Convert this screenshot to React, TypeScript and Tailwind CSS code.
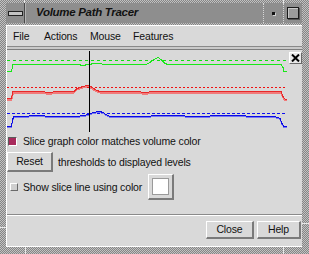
import React from "react";

const green: [number, number][] = [
  [7, 71], [11, 71], [12, 69], [13, 64], [80, 64], [81, 65], [85, 65], [86, 64], [91, 64], [92, 62.5], [100, 62.5], [102, 63.5], [104, 64], [146, 64], [150, 62], [154, 59], [158, 57], [161, 59], [165, 63], [168, 64], [188, 64], [190, 63.5], [193, 64], [281, 64], [283, 67], [284, 71], [287, 71],
];
const red: [number, number][] = [
  [7, 98], [11, 98], [12, 96], [13, 91], [44, 91], [46, 92], [52, 92], [54, 91], [74, 91], [77, 88], [83, 86], [89, 84.5], [92, 87], [97, 90], [100, 91], [140, 91], [142, 92], [148, 92], [150, 91], [281, 91], [283, 96], [285, 98.5], [287, 98.5],
];
const blue: [number, number][] = [
  [7, 126], [11, 126], [12, 123], [13, 118], [14, 116], [28, 116], [30, 115], [44, 115], [46, 116], [75, 116], [80, 115.5], [86, 114.5], [89, 113.5], [93, 112], [100, 111], [103, 112], [106, 114], [110, 116], [150, 116], [152, 115], [184, 115], [186, 116], [209, 116], [211, 115], [245, 115], [247, 116], [275, 116], [280, 118], [282, 123], [284, 126], [287, 126],
];

const pts = (a: [number, number][], dy = 0) =>
  a.map(([x, y]) => `${x},${y + 0.5 + dy}`).join(" ");

function Graph() {
  return (
    <div className="relative h-[82px]">
      <svg width="295" height="82" viewBox="0 0 295 82" className="block">
        <g transform="translate(-7,-50)" shapeRendering="crispEdges" fill="none">
          <line x1="7" y1="60.5" x2="287" y2="60.5" stroke="#10e010" strokeDasharray="3 3" />
          <polyline points={pts(green)} stroke="#18e818" strokeWidth="1" />
          <line x1="7" y1="87.5" x2="287" y2="87.5" stroke="#f01010" strokeDasharray="2 2" />
          <polyline points={pts(red, 1)} stroke="#f07b7b" strokeWidth="2" />
          <polyline points={pts(red)} stroke="#e82828" strokeWidth="1" />
          <line x1="7" y1="113.5" x2="287" y2="113.5" stroke="#1010f0" strokeDasharray="3 2" />
          <polyline points={pts(blue, 1)} stroke="#7a7af0" strokeWidth="1" />
          <polyline points={pts(blue)} stroke="#0a0ae6" strokeWidth="1" />
          <line x1="89.5" y1="51" x2="89.5" y2="132" stroke="#000" strokeWidth="1" />
        </g>
      </svg>
      <div className="absolute left-[282px] top-[2px] w-[13px] h-[12px] bg-[#e8e8e8] border-t border-l border-white border-r border-b border-r-[#6a6a6a] border-b-[#6a6a6a] flex items-center justify-center">
        <svg width="9" height="8" viewBox="0 0 9 8">
          <path d="M1 0.5 L8 7.5 M8 0.5 L1 7.5" stroke="#000" strokeWidth="2" />
        </svg>
      </div>
    </div>
  );
}

function Button({ label, w }: { label: string; w: string }) {
  return (
    <div
      className={`${w} h-full flex items-center justify-center bg-[#d9d9d9] border-t border-l border-white border-r-2 border-b-2 border-r-[#7a7a7a] border-b-[#7a7a7a] text-[#111]`}
    >
      {label}
    </div>
  );
}

export default function App() {
  return (
    <div className="w-[309px] h-[254px] relative bg-[repeating-conic-gradient(#858585_0%_25%,#c2c2c2_0%_50%)] bg-[length:2px_2px] pl-[6px] pr-[7px] pt-[3px] pb-[7px] flex flex-col font-['Liberation_Sans',Arial,sans-serif] text-[10.5px] tracking-[-0.15px] leading-none">
      {/* frame corner marks */}
      <div className="absolute left-[24px] top-0 w-px h-[3px] bg-[#e8e8e8]" />
      <div className="absolute left-[283px] top-0 w-px h-[3px] bg-[#e8e8e8]" />
      <div className="absolute left-[25px] bottom-0 w-px h-[7px] bg-[#e8e8e8]" />
      <div className="absolute left-[283px] bottom-0 w-px h-[7px] bg-[#e8e8e8]" />
      <div className="absolute left-0 top-[227px] w-[6px] h-px bg-[#e8e8e8]" />
      <div className="absolute right-0 top-[223px] w-[7px] h-px bg-[#e8e8e8]" />
      {/* title bar */}
      <div className="h-[20px] bg-[#8e8e8e] flex items-stretch">
        <div className="w-[18px] flex items-center justify-center">
          <div className="w-[15px] h-[5px] border border-[#222] bg-[#c4c4c4]" />
        </div>
        <div className="w-px bg-[#4a4a4a]" />
        <div className="w-px bg-[#b4b4b4]" />
        <div className="ml-[10px] flex items-center text-[11.5px] font-bold italic tracking-[-0.3px] text-[#121212]">
          Volume Path Tracer
        </div>
        <div className="flex-1" />
        <div className="w-px border-l border-dotted border-[#d6d6d6]" />
        <div className="w-[19px] flex items-center justify-center">
          <div className="w-[3px] h-[3px] bg-[#111] shadow-[1px_1px_0_#cfcfcf]" />
        </div>
        <div className="w-px border-l border-dotted border-[#d6d6d6]" />
        <div className="w-[18px] flex items-center justify-center">
          <div className="w-[12px] h-[12px] border border-[#1a1a1a] bg-[#9a9a9a] shadow-[inset_1px_1px_0_#c8c8c8,1px_1px_0_#555]" />
        </div>
      </div>
      <div className="h-[2px]" />
      {/* client */}
      <div className="flex-1 bg-[#d9d9d9] border-l border-b border-white flex flex-col text-[#111]">
        {/* menu bar */}
        <div className="h-[22px] border-t border-white border-b border-b-[#8a8a8a] flex items-center">
          <span className="ml-[6px] w-[31px]">File</span>
          <span className="w-[46px]">Actions</span>
          <span className="w-[43px]">Mouse</span>
          <span>Features</span>
        </div>
        <div className="h-[2px] bg-[#cacaca]" />
        <div className="h-px bg-[#7e7e7e]" />
        <Graph />
        {/* row 1 */}
        <div className="mt-[3px] h-[13px] flex items-center">
          <div className="ml-[1px] w-[9px] h-[9px] bg-[#a82a5c] border-t border-l border-[#5a5a5a] border-r border-b border-r-white border-b-white" />
          <span className="ml-[6px]">Slice graph color matches volume color</span>
        </div>
        {/* reset row */}
        <div className="mt-[4px] h-[20px] flex items-center">
          <Button label="Reset" w="w-[46px]" />
          <span className="ml-[5px]">thresholds to displayed levels</span>
        </div>
        {/* row 3 */}
        <div className="mt-[2px] h-[26px] flex items-center">
          <div className="ml-[3px] w-[8px] h-[8px] bg-[#cfcfcf] border-t border-l border-white border-r border-b border-r-[#6a6a6a] border-b-[#6a6a6a]" />
          <span className="ml-[5px]">Show slice line using color</span>
          <div className="ml-[6px] w-[26px] h-[26px] bg-[#d9d9d9] border-t border-l border-white border-r-2 border-b-2 border-r-[#7a7a7a] border-b-[#7a7a7a] flex items-center justify-center">
            <div className="w-[17px] h-[17px] bg-white border border-[#9a9a9a]" />
          </div>
        </div>
        {/* separator */}
        <div className="mt-[14px] h-px bg-[#8a8a8a]" />
        <div className="h-px bg-white" />
        {/* buttons */}
        <div className="mt-[5px] h-[18px] flex justify-end gap-[3px] pr-[1px]">
          <Button label="Close" w="w-[48px]" />
          <Button label="Help" w="w-[44px]" />
        </div>
      </div>
    </div>
  );
}
